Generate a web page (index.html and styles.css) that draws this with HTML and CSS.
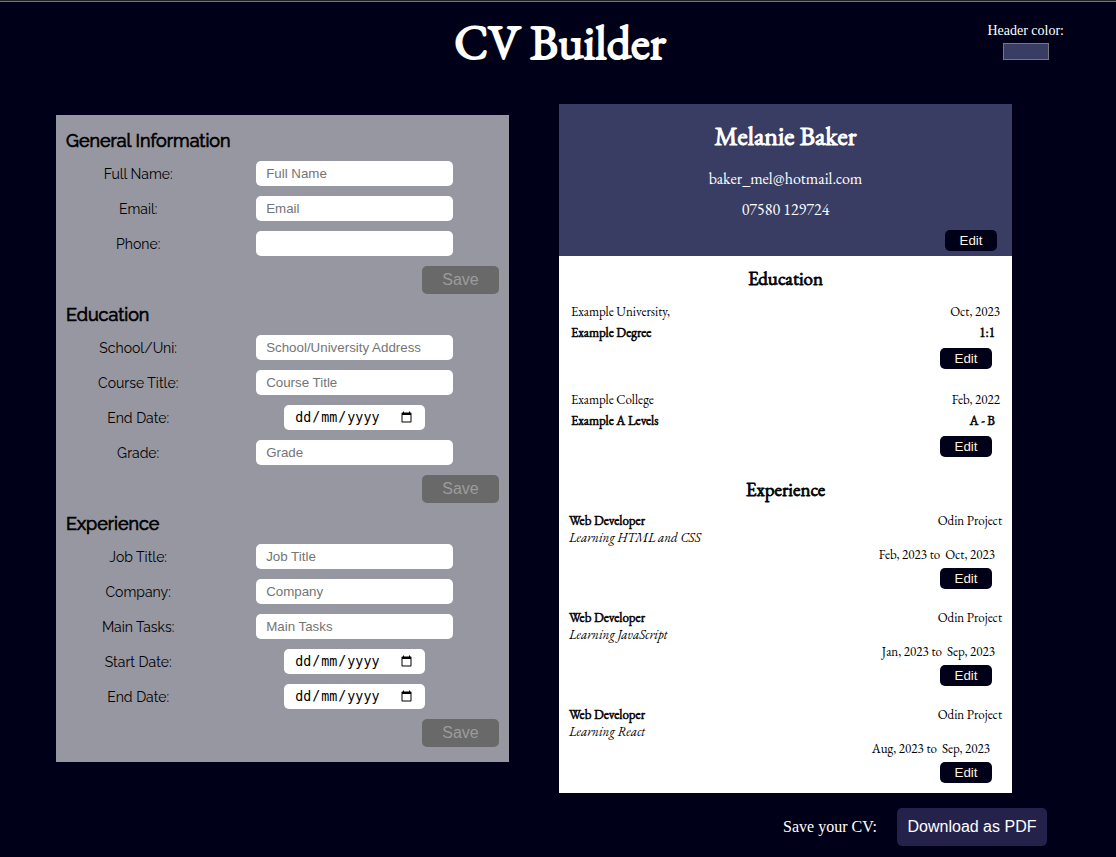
FILE: index.html
```html
<!DOCTYPE html>
<html lang="en-GB">
<head>
<meta charset="utf-8">
<title>CV Builder</title>
<link rel="stylesheet" href="styles.css">
</head>
<body>
<header class="top">
  <h1 class="title drawn-bold">CV Builder</h1>
  <div class="picker">
    <label for="color">Header color:</label>
    <input class="swatch" type="color" id="color" value="#393d63">
  </div>
</header>
<main class="columns">
  <div class="forms">
    <form class="form">
      <h2 class="form-heading drawn-bold">General Information</h2>
      <div class="field"><label for="name">Full Name:</label><input class="box" id="name" type="text" placeholder="Full Name"></div>
      <div class="field"><label for="email">Email:</label><input class="box" id="email" type="email" placeholder="Email"></div>
      <div class="field"><label for="phone">Phone:</label><input class="box" id="phone" type="tel"></div>
      <button class="save" type="submit" disabled>Save</button>
    </form>
    <form class="form">
      <h2 class="form-heading drawn-bold">Education</h2>
      <div class="field"><label for="school">School/Uni:</label><input class="box" id="school" type="text" placeholder="School/University Address"></div>
      <div class="field"><label for="course">Course Title:</label><input class="box" id="course" type="text" placeholder="Course Title"></div>
      <div class="field"><label for="edu-end">End Date:</label><input class="box date" id="edu-end" type="date"></div>
      <div class="field"><label for="grade">Grade:</label><input class="box" id="grade" type="text" placeholder="Grade"></div>
      <button class="save" type="submit" disabled>Save</button>
    </form>
    <form class="form">
      <h2 class="form-heading drawn-bold">Experience</h2>
      <div class="field"><label for="job">Job Title:</label><input class="box" id="job" type="text" placeholder="Job Title"></div>
      <div class="field"><label for="company">Company:</label><input class="box" id="company" type="text" placeholder="Company"></div>
      <div class="field"><label for="tasks">Main Tasks:</label><input class="box" id="tasks" type="text" placeholder="Main Tasks"></div>
      <div class="field"><label for="start">Start Date:</label><input class="box date" id="start" type="date"></div>
      <div class="field"><label for="end">End Date:</label><input class="box date" id="end" type="date"></div>
      <button class="save" type="submit" disabled>Save</button>
    </form>
  </div>
  <article class="cv">
    <header class="cv-header">
      <h2 class="cv-name drawn-bold">Melanie Baker</h2>
      <p class="contact">baker_mel@hotmail.com</p>
      <p class="contact">07580 129724</p>
      <button class="edit" type="button">Edit</button>
    </header>
    <section class="cv-section">
      <h3 class="cv-heading drawn-bold">Education</h3>
      <div class="study">
        <p class="line"><span>Example University,</span><span>Oct, 2023</span></p>
        <p class="line drawn-bold"><span>Example Degree</span><span class="grade">1:1</span></p>
        <button class="edit" type="button">Edit</button>
      </div>
      <div class="study">
        <p class="line"><span>Example College</span><span>Feb, 2022</span></p>
        <p class="line drawn-bold"><span>Example A Levels</span><span class="grade">A - B</span></p>
        <button class="edit" type="button">Edit</button>
      </div>
    </section>
    <section class="cv-section">
      <h3 class="cv-heading drawn-bold">Experience</h3>
      <div class="job">
        <p class="line"><b class="drawn-bold">Web Developer</b><span>Odin Project</span></p>
        <p class="line"><em>Learning HTML and CSS</em></p>
        <p class="dates"><span>Feb, 2023 to</span><span>Oct, 2023</span></p>
        <button class="edit" type="button">Edit</button>
      </div>
      <div class="job">
        <p class="line"><b class="drawn-bold">Web Developer</b><span>Odin Project</span></p>
        <p class="line"><em>Learning JavaScript</em></p>
        <p class="dates"><span>Jan, 2023 to</span><span>Sep, 2023</span></p>
        <button class="edit" type="button">Edit</button>
      </div>
      <div class="job">
        <p class="line"><b class="drawn-bold">Web Developer</b><span>Odin Project</span></p>
        <p class="line"><em>Learning React</em></p>
        <p class="dates wide"><span>Aug, 2023 to</span><span>Sep, 2023</span></p>
        <button class="edit" type="button">Edit</button>
      </div>
    </section>
  </article>
</main>
<footer class="bottom">
  <span>Save your CV:</span>
  <button class="download" type="button">Download as PDF</button>
</footer>
</body>
</html>
```
FILE: styles.css
```css
* { box-sizing: border-box; }

body {
  margin: 0;
  min-height: 100vh;
  border-top: 2px groove #777;
  background: #000118;
  color: #fff;
  font-family: "Liberation Serif", serif;
}

h1, h2, h3, p { margin: 0; }

button { border: 0; font-family: "Liberation Sans", sans-serif; }

/* Regular letterforms thickened by an outline */
.drawn-bold {
  font-weight: 400;
  -webkit-text-stroke: 0.04em currentColor;
}

.top {
  display: grid;
  grid-template-columns: 1fr auto 1fr;
  height: 102px;
}

.title {
  grid-column: 2;
  padding: 10px 0 0 4px;
  font-family: "EB Garamond", "Liberation Serif", serif;
  font-size: 48px;
  line-height: 60px;
}

.picker {
  display: flex;
  flex-direction: column;
  align-items: center;
  gap: 4px;
  justify-self: end;
  padding: 20px 52px 0 0;
  font-size: 14px;
  line-height: 17px;
}

.swatch {
  appearance: none;
  width: 46px;
  height: 17px;
  padding: 0;
  border: 0;
  background: none;
}

.swatch::-webkit-color-swatch-wrapper { padding: 0; }
.swatch::-webkit-color-swatch { border: 1px solid #777; border-radius: 0; }

.columns {
  display: grid;
  grid-template-columns: 1fr 1fr;
  align-items: start;
  gap: 50px;
  padding: 0 104px 0 56px;
}

.forms {
  display: grid;
  gap: 10px;
  margin-top: 11px;
  padding: 15px 10px;
  background: #9797a1;
  color: #000;
  font-family: Raleway, Lato, sans-serif;
}

.form { display: grid; gap: 10px; }

.form-heading {
  font-size: 18px;
  line-height: 21px;
}

.field {
  display: grid;
  grid-template-columns: 1fr 2fr;
  align-items: center;
  justify-items: center;
  height: 25px;
  font-size: 14px;
  line-height: 27px;
}

.box {
  width: 197px;
  height: 25px;
  padding: 0 10px;
  border: 0;
  border-radius: 5px;
  background: #fff;
  font-family: "Liberation Sans", sans-serif;
}

.field label { height: 25px; }

.box::placeholder { color: #757575; }

.date {
  width: 141px;
  font-family: monospace;
}

/* Day first: the two slashes fall into the free columns 2 and 4 */
.date::-webkit-datetime-edit-fields-wrapper { display: inline-grid; }
.date::-webkit-datetime-edit-text { grid-row: 1; }
.date::-webkit-datetime-edit-day-field { grid-area: 1 / 1; }
.date::-webkit-datetime-edit-month-field { grid-area: 1 / 3; }
.date::-webkit-datetime-edit-year-field { grid-area: 1 / 5; }

.save {
  justify-self: end;
  width: 77px;
  height: 28px;
  border-radius: 5px;
  background: #696969;
  color: #9c9c9c;
  font-size: 16px;
}

.cv {
  padding-bottom: 10px;
  background: #fff;
  color: #000;
  font-family: "EB Garamond", "Liberation Serif", serif;
}

.cv-header {
  display: flex;
  flex-direction: column;
  align-items: center;
  padding: 15px 15px 5px;
  background: #393d63;
  color: #fff;
}

.cv-name {
  margin-bottom: 12px;
  font-size: 26px;
  line-height: 35px;
}

.contact {
  margin-bottom: 5px;
  font-size: 16px;
  line-height: 26px;
}

.edit {
  display: block;
  width: 52px;
  height: 21px;
  margin: 4px 20px 0 auto;
  padding: 0;
  border-radius: 5px;
  background: #000118;
  color: #fff1dc;
}

.cv-header .edit { margin: 2px 0 0 auto; }

.cv-section { padding-top: 11px; }
.cv-section + .cv-section { padding-top: 21px; }

.cv-heading {
  margin-bottom: 10px;
  font-size: 19px;
  line-height: 24px;
  text-align: center;
}

.line {
  display: flex;
  justify-content: space-between;
}

.study { padding: 0 12px; font-size: 13px; line-height: 21px; }
.job { padding: 0 10px; font-size: 13px; line-height: 17px; }
.study .edit { margin: 5px 8px 0 auto; }
.job .edit { margin: 5px 10px 0 auto; }
.study + .study, .job + .job { margin-top: 20px; }

.grade { padding-right: 5px; }

.dates {
  display: flex;
  justify-content: flex-end;
  gap: 5px;
  padding-right: 7px;
}

.wide { padding-right: 12px; }

.bottom {
  display: flex;
  align-items: center;
  justify-content: flex-end;
  gap: 20px;
  padding: 15px 69px 11px 0;
  font-size: 16px;
}

.download {
  width: 150px;
  height: 38px;
  padding: 0 10px;
  border-radius: 5px;
  background: #24224b;
  color: #fff;
  font-size: 16px;
}
```
